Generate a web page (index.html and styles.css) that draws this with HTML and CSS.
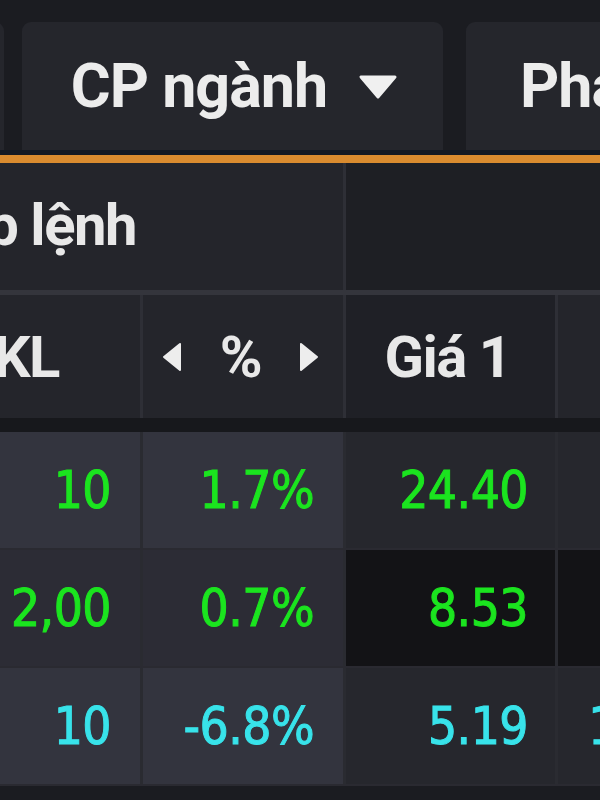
FILE: index.html
```html
<!DOCTYPE html>
<html lang="vi">
<head>
<meta charset="utf-8">
<title>Bảng giá</title>
<link rel="stylesheet" href="styles.css">
</head>
<body>
<div class="screen">
  <div class="tabs">
    <div class="tab tab-edge"></div>
    <div class="tab tab-main">
      <span class="tab-label">CP ngành</span>
      <svg class="caret" width="40" height="26" viewBox="0 0 40 26"><path d="M3 3h34L20 23z" fill="#f0f0f0" stroke="#f0f0f0" stroke-width="3" stroke-linejoin="round"/></svg>
    </div>
    <div class="tab tab-next"><span class="tab-label">Phái sinh</span></div>
  </div>
  <div class="tabline"></div>

  <div class="board">
    <div class="row head1">
      <div class="cell span2 hd-group">Khớp lệnh</div>
      <div class="cell span2 hd-empty"></div>
    </div>
    <div class="row head2">
      <div class="cell hd hd-kl">KL</div>
      <div class="cell hd hd-pct">
        <svg width="22" height="32" viewBox="0 0 22 32"><path d="M19 3v26L3 16z" fill="#ededed" stroke="#ededed" stroke-width="2" stroke-linejoin="round"/></svg>
        <span>%</span>
        <svg width="22" height="32" viewBox="0 0 22 32"><path d="M3 3v26L19 16z" fill="#ededed" stroke="#ededed" stroke-width="2" stroke-linejoin="round"/></svg>
      </div>
      <div class="cell hd hd-price">Giá 1</div>
      <div class="cell hd hd-last"></div>
    </div>
    <div class="spacer"></div>

    <div class="row data">
      <div class="cell num c-kl up">10</div>
      <div class="cell num c-pct up">1.7%</div>
      <div class="cell num c-price up">24.40</div>
      <div class="cell num c-last"></div>
    </div>
    <div class="row data alt">
      <div class="cell num c-kl up">2,00</div>
      <div class="cell num c-pct up">0.7%</div>
      <div class="cell num c-price up">8.53</div>
      <div class="cell num c-last"></div>
    </div>
    <div class="row data">
      <div class="cell num c-kl down">10</div>
      <div class="cell num c-pct down">-6.8%</div>
      <div class="cell num c-price down">5.19</div>
      <div class="cell num c-last down">14,20</div>
    </div>
  </div>
</div>
</body>
</html>
```

FILE: styles.css
```css
html, body {
  margin: 0;
  padding: 0;
  background: #1b1c21;
}

.screen {
  width: 600px;
  height: 800px;
  overflow: hidden;
  background: #1b1c21;
}

/* ---------- tabs ---------- */
.tabs {
  display: flex;
  align-items: flex-end;
  height: 150px;
  padding-top: 22px;
  box-sizing: border-box;
  gap: 23px;
}

.tab {
  height: 128px;
  background: #25262c;
  border-radius: 9px 9px 0 0;
  display: flex;
  align-items: center;
  flex-shrink: 0;
  box-sizing: border-box;
}

.tab-edge {
  width: 30px;
  margin-left: -26px;
  margin-right: -5px;
}

.tab-main {
  width: 421px;
  justify-content: center;
  gap: 31px;
  padding-left: 4px;
}

.tab-next {
  width: 300px;
  padding-left: 54px;
}

.tab-label {
  font-family: Roboto, "Liberation Sans", sans-serif;
  font-weight: 700;
  font-size: 61px;
  letter-spacing: -1px;
  color: #ececec;
  white-space: nowrap;
  line-height: 1;
}

.caret {
  display: block;
  margin-top: 2px;
}

.tabline {
  height: 5px;
  background: #141922;
  border-bottom: 8px solid #d98b2f;
}

/* ---------- board ---------- */
.board {
  margin-left: -105px;
  width: 863px;
  background: #1b1c21;
}

.row {
  display: grid;
  grid-template-columns: 245px 200px 209px 200px;
  column-gap: 3px;
}

.cell {
  display: flex;
  align-items: center;
  box-sizing: border-box;
  overflow: hidden;
  white-space: nowrap;
}

.span2 {
  grid-column: span 2;
}

.head1 {
  height: 127px;
  background: #2e2f36;
  border-bottom: 5px solid #34353c;
}

.head2 {
  height: 123px;
  background: #2e2f36;
}

.hd-group,
.hd {
  font-family: Roboto, "Liberation Sans", sans-serif;
  font-weight: 700;
  font-size: 58px;
  letter-spacing: -1.5px;
  color: #e8e8e8;
  line-height: 1;
}

.hd-group {
  background: #24252b;
  justify-content: flex-end;
  padding-right: 207px;
  padding-bottom: 4px;
}

.hd-empty {
  background: #1e1f24;
}

.hd-kl {
  background: #24252b;
  justify-content: flex-end;
  padding-right: 81px;
}

.hd-pct {
  background: #24252b;
  justify-content: space-between;
  padding: 0 23px 0 18px;
}

.hd-pct svg {
  display: block;
}

.hd-price {
  background: #1f2026;
  justify-content: center;
  padding-right: 6px;
}

.hd-last {
  background: #24252b;
}

.spacer {
  height: 14px;
  background: #17181c;
}

/* ---------- data rows ---------- */
.data {
  height: 116px;
  background: #2a2b31;
  border-bottom: 2px solid #2a2a31;
}

.num {
  font-family: "DejaVu Sans Condensed", "DejaVu Sans", sans-serif;
  font-size: 51px;
  letter-spacing: -0.5px;
  line-height: 1;
  justify-content: flex-end;
  -webkit-text-stroke: 1px currentColor;
}

.c-kl,
.c-pct {
  background: #33343e;
  padding-right: 29px;
}

.c-price {
  background: #26272d;
  padding-right: 27px;
}

.c-last {
  background: #26272d;
  padding-right: 41px;
}

.alt .c-kl,
.alt .c-pct {
  background: #2c2c35;
}

.alt .c-price,
.alt .c-last {
  background: #131316;
}

.up {
  color: #1be41f;
}

.down {
  color: #38e3ea;
}
```
